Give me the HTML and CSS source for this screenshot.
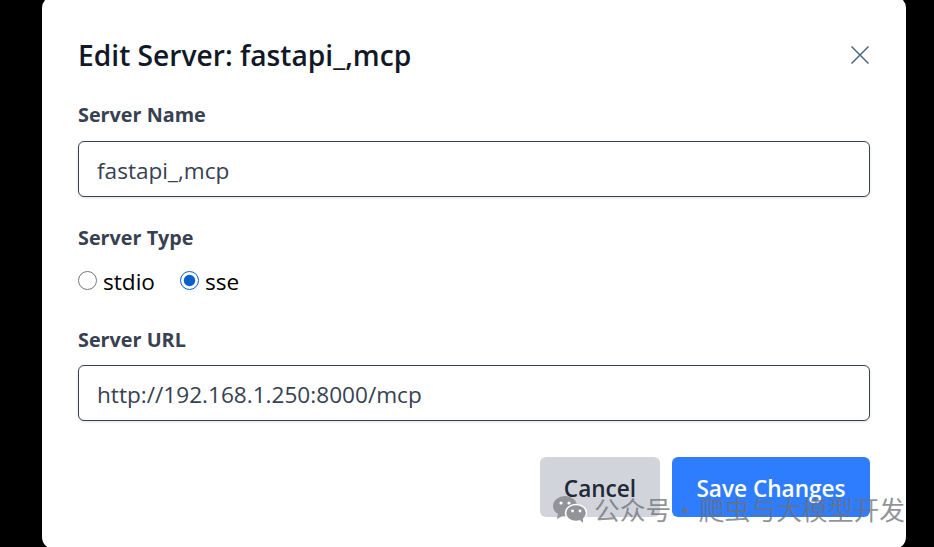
FILE: index.html
```html
<!DOCTYPE html>
<html lang="en">
  <head>
    <meta charset="UTF-8" />
    <title>Edit Server</title>
    <link rel="stylesheet" href="styles.css">
  </head>
  <body>
    <div class="modal">
      <div class="modal-header">
        <h2>Edit Server: fastapi_,mcp</h2>
        <button type="button" class="close-btn" aria-label="Close">
          <svg width="20" height="20" viewBox="0 0 20 20" fill="none" stroke="#4b6480" stroke-width="1.5">
            <path d="M1.5 1.5 L18.5 18.5 M18.5 1.5 L1.5 18.5" />
          </svg>
        </button>
      </div>
      <form class="server-form">
        <div class="field">
          <label for="name">Server Name</label>
          <input type="text" id="name" value="fastapi_,mcp" />
        </div>
        <div class="field field-type">
          <span class="label">Server Type</span>
          <div class="radio-row">
            <label class="radio"><input type="radio" name="type" /> stdio</label>
            <label class="radio"><input type="radio" name="type" checked /> sse</label>
          </div>
        </div>
        <div class="field field-url">
          <label for="url">Server URL</label>
          <input type="text" id="url" value="http://192.168.1.250:8000/mcp" />
        </div>
        <div class="actions">
          <button type="button" class="btn btn-cancel">Cancel</button>
          <button type="submit" class="btn btn-save">Save Changes</button>
        </div>
      </form>
    </div>

    <div class="watermark">
      <svg width="36" height="28" viewBox="0 0 36 28">
        <ellipse cx="13" cy="11" rx="12" ry="10" fill="#92949a" />
        <path d="M6 18 L5 24 L12 20 Z" fill="#92949a" />
        <ellipse cx="24" cy="18" rx="10.5" ry="8.5" fill="#92949a" stroke="#fff" stroke-width="1.5" />
        <path d="M28 25 L31 28 L31 23 Z" fill="#92949a" />
        <circle cx="9" cy="8" r="1.6" fill="#fff" />
        <circle cx="17" cy="8" r="1.6" fill="#fff" />
        <circle cx="20.5" cy="16" r="1.4" fill="#fff" />
        <circle cx="28" cy="16" r="1.4" fill="#fff" />
      </svg>
      <span>公众号 · 爬虫与大模型开发</span>
    </div>
  </body>
</html>
```

FILE: styles.css
```css
html,
body {
  height: 100%;
}
body {
  margin: 0;
  background: #000;
  overflow: hidden;
  font-family: "Open Sans", "Noto Sans", sans-serif;
  color: #374151;
}
.modal {
  box-sizing: border-box;
  width: 864px;
  height: 553px;
  margin: -4px 0 0 42px;
  padding: 36px 36px 0;
  background: #fff;
  border-radius: 12px;
}
.modal-header {
  display: flex;
  justify-content: space-between;
  align-items: center;
  height: 46px;
}
.modal-header h2 {
  margin: 0;
  font-size: 28.2px;
  font-weight: 600;
  color: #111827;
}
.close-btn {
  display: flex;
  padding: 0;
  border: none;
  background: none;
}
.server-form {
  margin-top: 24px;
}
.field label,
.field .label {
  display: block;
  font-size: 19.8px;
  font-weight: 700;
  line-height: 26px;
  color: #374151;
}
.field input[type="text"] {
  display: block;
  box-sizing: border-box;
  width: 100%;
  height: 56px;
  margin-top: 13px;
  padding: 2px 18px 0;
  border: 1px solid #374151;
  border-radius: 6px;
  box-shadow: 0 1px 3px rgba(0, 0, 0, 0.12);
  font-family: inherit;
  font-size: 22.6px;
  color: #374151;
}
.field-type {
  margin-top: 28px;
}
.radio-row {
  display: flex;
  gap: 25px;
  margin-top: 18px;
}
.field .radio {
  display: flex;
  align-items: center;
  gap: 6px;
  font-size: 22.6px;
  font-weight: 400;
  color: #000;
}
.radio input {
  width: 19px;
  height: 19px;
  margin: 0 0 3px;
  accent-color: #0a5fc9;
}
.field-url {
  margin-top: 32px;
}
.field-url input[type="text"] {
  margin-top: 12px;
}
.actions {
  display: flex;
  justify-content: flex-end;
  gap: 12px;
  margin-top: 36px;
}
.btn {
  height: 60px;
  padding: 3px 0 0;
  border: none;
  border-radius: 6px;
  font-family: inherit;
  font-size: 22.6px;
  font-weight: 600;
}
.btn-cancel {
  width: 120px;
  background: #d1d5db;
  color: #1f2937;
}
.btn-save {
  width: 198px;
  background: #2e7dff;
  color: #fff;
}
/* account watermark stamped over the bottom right corner */
.watermark {
  position: absolute;
  left: 552px;
  top: 490px;
  display: flex;
  align-items: center;
  gap: 6px;
  color: rgba(110, 112, 118, 0.75);
  font-family: "Noto Sans CJK SC", sans-serif;
  font-size: 25.8px;
  word-spacing: -5px;
  white-space: nowrap;
}
```
